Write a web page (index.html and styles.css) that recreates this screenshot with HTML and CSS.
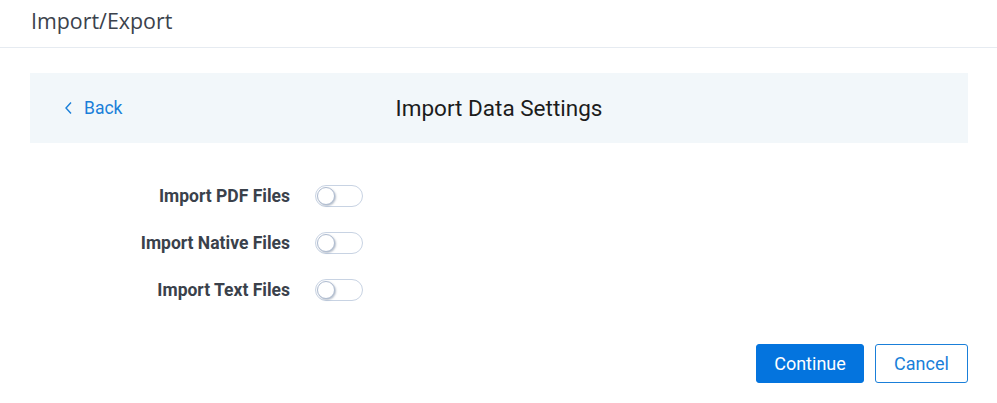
FILE: index.html
```html
<!DOCTYPE html>
<html lang="en">
<head>
    <meta charset="UTF-8">
    <title>Import/Export</title>
    <link rel="stylesheet" href="styles.css">
</head>
<body>
    <header class="page-header">
        <h1>Import/Export</h1>
    </header>

    <main class="content">
        <div class="settings-bar">
            <a href="#" class="back-link">
                <svg width="10" height="14" viewBox="0 0 10 14"><path d="M7 1.5 L2 7 L7 12.5" fill="none" stroke="currentColor" stroke-width="1.4"/></svg>
                <span>Back</span>
            </a>
            <h2>Import Data Settings</h2>
        </div>

        <div class="options">
            <label class="option-label">Import PDF Files</label>
            <span class="toggle"><span class="knob"></span></span>

            <label class="option-label">Import Native Files</label>
            <span class="toggle"><span class="knob"></span></span>

            <label class="option-label">Import Text Files</label>
            <span class="toggle"><span class="knob"></span></span>
        </div>

        <div class="actions">
            <button class="btn btn-primary">Continue</button>
            <button class="btn btn-outline">Cancel</button>
        </div>
    </main>
</body>
</html>
```

FILE: styles.css
```css
* {
    margin: 0;
    padding: 0;
    box-sizing: border-box;
}

body {
    background-color: #fff;
    font-family: Roboto, 'Liberation Sans', sans-serif;
    color: #222;
}

.page-header {
    height: 48px;
    border-bottom: 1px solid #e6ebf1;
    padding: 6px 31px 0;
}

.page-header h1 {
    font-family: 'Open Sans', sans-serif;
    font-size: 21.4px;
    font-weight: 400;
    color: #3b424c;
    line-height: 29px;
}

.content {
    padding: 25px 29px 0 30px;
}

.settings-bar {
    height: 70px;
    background-color: #f2f7fa;
    display: flex;
    align-items: center;
    justify-content: center;
    position: relative;
}

.back-link {
    position: absolute;
    left: 34px;
    top: 25px;
    display: flex;
    align-items: center;
    gap: 10px;
    color: #1a7fd9;
    text-decoration: none;
    font-size: 17.5px;
}

.settings-bar h2 {
    font-size: 22.5px;
    font-weight: 400;
    color: #1c1c1c;
}

.options {
    display: grid;
    grid-template-columns: 260px 48px;
    column-gap: 25px;
    row-gap: 25px;
    align-items: center;
    margin-top: 42px;
}

.option-label {
    text-align: right;
    font-size: 17.5px;
    font-weight: 700;
    color: #3a414b;
    line-height: 22px;
}

.toggle {
    width: 48px;
    height: 22px;
    border: 1px solid #c8d3e3;
    border-radius: 11px;
    background-color: #fff;
    display: flex;
    align-items: center;
    padding-left: 1px;
}

.knob {
    width: 18px;
    height: 18px;
    border-radius: 50%;
    border: 1px solid #aebbd0;
    background-color: #fff;
    box-shadow: 1px 1px 2px rgba(90, 110, 140, 0.45);
}

.actions {
    display: flex;
    justify-content: flex-end;
    gap: 11px;
    margin-top: 43px;
}

.btn {
    height: 39px;
    border-radius: 3px;
    font-family: Roboto, sans-serif;
    font-size: 18px;
    cursor: pointer;
}

.btn-primary {
    width: 108px;
    background-color: #0474de;
    border: 1px solid #0474de;
    color: #fff;
}

.btn-outline {
    width: 93px;
    background-color: #fff;
    border: 1px solid #1a7fd9;
    color: #1a7fd9;
}
```
